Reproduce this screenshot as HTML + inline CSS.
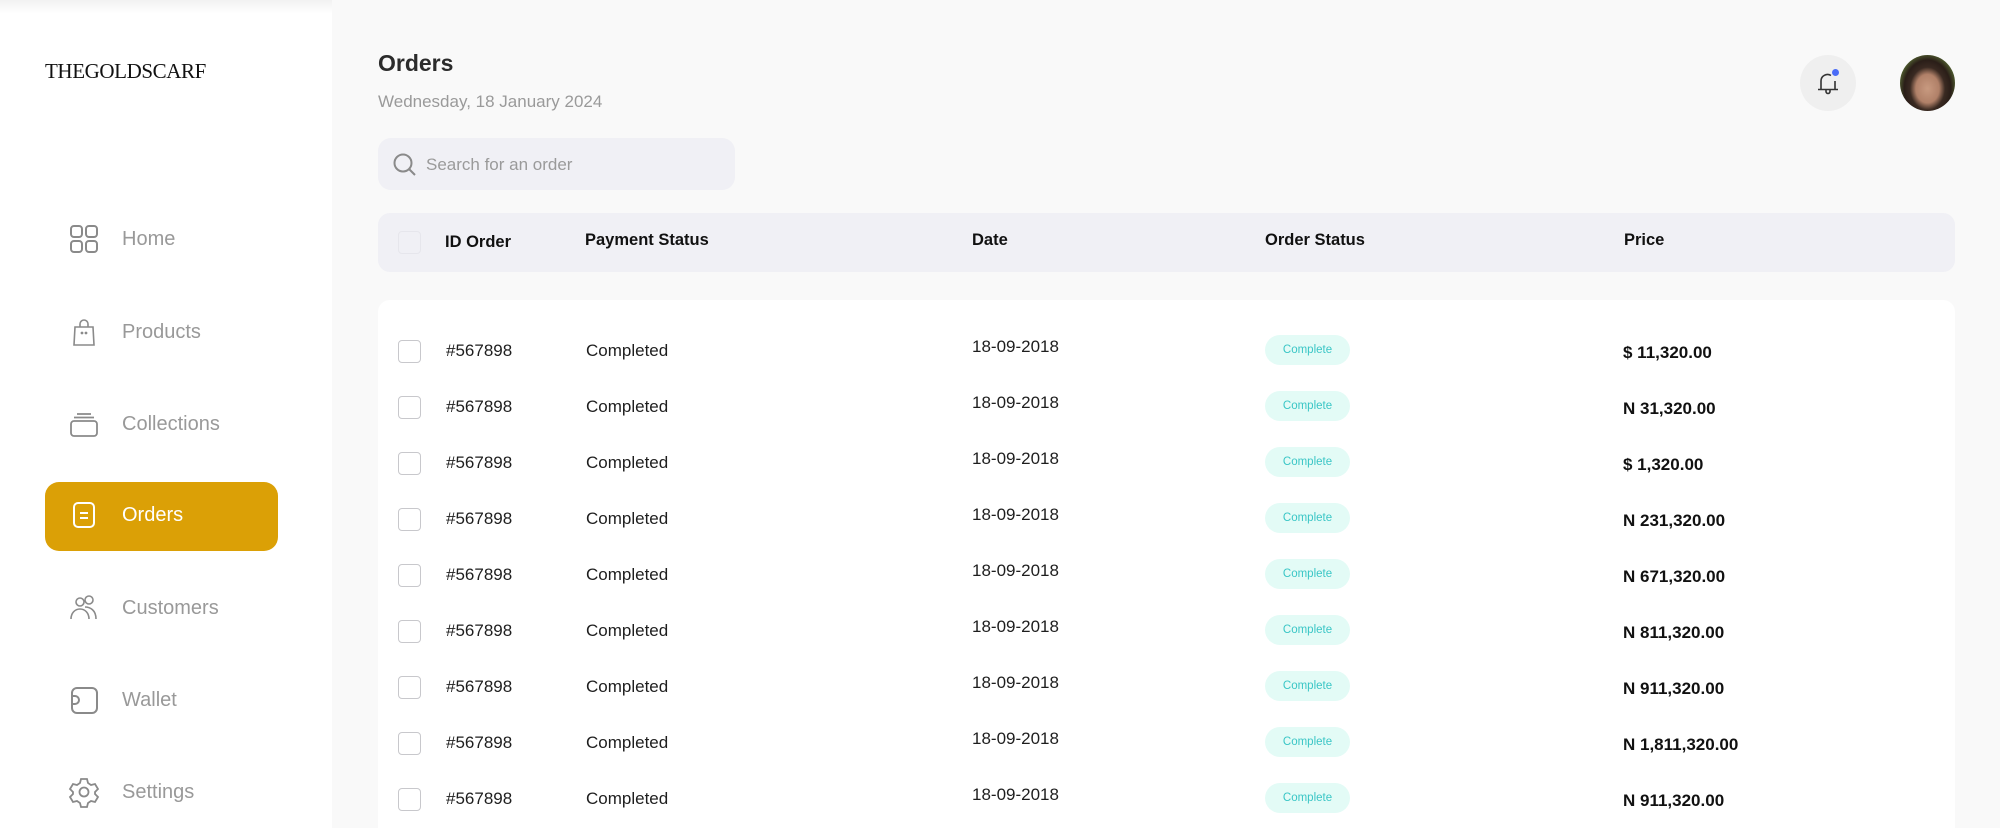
<!DOCTYPE html>
<html><head><meta charset="utf-8"><style>
*{margin:0;padding:0;box-sizing:border-box}
html{width:2000px;height:828px;overflow:hidden}
body{width:2000px;height:828px;overflow:hidden;background:#f9f9f9;font-family:"Liberation Sans",sans-serif;position:relative}
.side{position:absolute;left:0;top:0;width:332px;height:828px;background:#fff}
.side:before{content:"";position:absolute;left:0;top:0;width:332px;height:14px;background:linear-gradient(#f1f1f1,#fff)}
.abs{position:absolute}
.logo{left:45px;top:59px;font-family:"Liberation Serif",serif;font-size:21px;color:#111;letter-spacing:-0.4px}
.nav{position:absolute;left:68px;height:36px;display:flex;align-items:center;color:#999;font-size:20px}
.nav svg{width:32px;height:32px;margin-right:22px}
.active{position:absolute;left:45px;top:482px;width:233px;height:69px;background:#dba006;border-radius:14px}
.title{left:378px;top:50px;font-size:23px;font-weight:bold;color:#2b2b2b}
.date{left:378px;top:92px;font-size:17px;color:#9a9a9a}
.search{left:378px;top:138px;width:357px;height:52px;background:#f0f0f5;border-radius:13px}
.search span{position:absolute;left:48px;top:17px;font-size:17px;color:#9a9a9a}
.head{left:378px;top:213px;width:1577px;height:59px;background:#f0f0f5;border-radius:12px}
.hc{position:absolute;top:18px;font-size:16.5px;font-weight:bold;color:#111}
.card{left:378px;top:300px;width:1577px;height:528px;background:#fff;border-radius:12px 12px 0 0}
.cb{position:absolute;width:23px;height:23px;border:1.5px solid #c8c8cc;border-radius:4px;background:#fff}
.t{position:absolute;font-size:17px;color:#1e1e1e;line-height:20px}
.pill{position:absolute;width:85px;height:30px;border-radius:15px;background:#e3fbf6;color:#3ac6c6;font-size:11.5px;text-align:center;line-height:30px}
.pr{position:absolute;font-size:17px;font-weight:bold;color:#111;line-height:20px}
.bell{left:1800px;top:55px;width:56px;height:56px;border-radius:50%;background:#efefef}
.av{left:1900px;top:55px;width:55px;height:56px;border-radius:50%;background:radial-gradient(ellipse at 50% 60%,#c89a80 0,#b08068 30%,#3a2a22 45%,#2a1e18 60%,#6a8a40 85%,#8aa050 100%)}
</style></head><body>
<div class="side">
<div class="abs logo">THEGOLDSCARF</div>
<div class="active"></div>
<div class="nav" style="top:221px"><svg viewBox="0 0 32 32" fill="none" stroke="#8a8a8a" stroke-width="2"><rect x="3" y="3" width="11" height="11" rx="3"/><rect x="18" y="3" width="11" height="11" rx="3"/><rect x="3" y="18" width="11" height="11" rx="3"/><rect x="18" y="18" width="11" height="11" rx="3"/></svg>Home</div>
<div class="nav" style="top:314px"><svg viewBox="0 0 32 32" fill="none" stroke="#8a8a8a" stroke-width="1.6"><path d="M7 11h18l1 18H6z"/><path d="M12 11V8a4 4 0 0 1 8 0v3"/><circle cx="14" cy="17" r=".6" fill="#8a8a8a"/><circle cx="18" cy="17" r=".6" fill="#8a8a8a"/></svg>Products</div>
<div class="nav" style="top:406px"><svg viewBox="0 0 32 32" fill="none" stroke="#8a8a8a" stroke-width="1.8"><rect x="3" y="13" width="26" height="15" rx="3"/><path d="M6 9.5h20M9 6h14"/></svg>Collections</div>
<div class="nav" style="top:497px;color:#fff"><svg viewBox="0 0 32 32" fill="none" stroke="#fff" stroke-width="2"><rect x="6" y="4" width="20" height="24" rx="4"/><path d="M12 14h8M12 19h8"/></svg>Orders</div>
<div class="nav" style="top:590px"><svg viewBox="0 0 32 32" fill="none" stroke="#8a8a8a" stroke-width="1.6"><circle cx="12" cy="10" r="4"/><circle cx="21" cy="8" r="4"/><path d="M3 27c0-6 4-10 9-10s9 4 9 10M17 15c5 0 11 3 11 12"/></svg>Customers</div>
<div class="nav" style="top:682px"><svg viewBox="0 0 32 32" fill="none" stroke="#8a8a8a" stroke-width="2"><rect x="4" y="4" width="25" height="25" rx="5"/><path d="M4 12h3a4 4 0 0 1 0 8H4"/></svg>Wallet</div>
<div class="nav" style="top:774px"><svg viewBox="0 0 32 32" fill="none" stroke="#8a8a8a" stroke-width="1.8"><path d="M13 3h6l1 4 3 2 4-1 3 5-3 3v2l3 3-3 5-4-1-3 2-1 4h-6l-1-4-3-2-4 1-3-5 3-3v-2l-3-3 3-5 4 1 3-2z"/><circle cx="16" cy="16" r="4.5"/></svg>Settings</div>
</div>
<div class="abs title">Orders</div>
<div class="abs date">Wednesday, 18 January 2024</div>
<div class="abs search"><svg class="abs" style="left:14px;top:14px" width="26" height="26" viewBox="0 0 26 26" fill="none" stroke="#8a8a8a" stroke-width="2"><circle cx="11" cy="11" r="8.5"/><path d="M17 17l6 6"/></svg><span>Search for an order</span></div>
<div class="abs bell"><svg class="abs" style="left:14px;top:14px" width="28" height="28" viewBox="0 0 28 28" fill="none" stroke="#333" stroke-width="1.6"><path d="M7 20V12a6.5 6.5 0 0 1 10-5.5"/><path d="M21 12v8M4 20.5h20M12 21v1.5a2 2 0 0 0 4 0V21"/></svg><div class="abs" style="left:32px;top:14px;width:7px;height:7px;border-radius:50%;background:#4a6cf7"></div></div>
<div class="abs av"></div>
<div class="abs head">
<div class="cb" style="left:20px;top:18px;border-color:#e6e6ec;background:#f0f0f5"></div>
<div class="hc" style="left:67px;top:20px">ID Order</div>
<div class="hc" style="left:207px">Payment Status</div>
<div class="hc" style="left:594px">Date</div>
<div class="hc" style="left:887px">Order Status</div>
<div class="hc" style="left:1246px">Price</div>
</div>
<div class="abs card"></div>
<div id="rows"></div>
<script>
var p=["$ 11,320.00","N 31,320.00","$ 1,320.00","N 231,320.00","N 671,320.00","N 811,320.00","N 911,320.00","N 1,811,320.00","N 911,320.00"],h="";
for(var i=0;i<9;i++){var c=351+56*i;
h+='<div class="cb" style="left:398px;top:'+(c-11)+'px"></div>'+
'<div class="t" style="left:446px;top:'+(c-10)+'px">#567898</div>'+
'<div class="t" style="left:586px;top:'+(c-10)+'px">Completed</div>'+
'<div class="t" style="left:972px;top:'+(c-14)+'px">18-09-2018</div>'+
'<div class="pill" style="left:1265px;top:'+(c-16)+'px">Complete</div>'+
'<div class="pr" style="left:1623px;top:'+(c-8)+'px">'+p[i]+'</div>';}
document.getElementById("rows").innerHTML=h;
</script>
</body></html>
